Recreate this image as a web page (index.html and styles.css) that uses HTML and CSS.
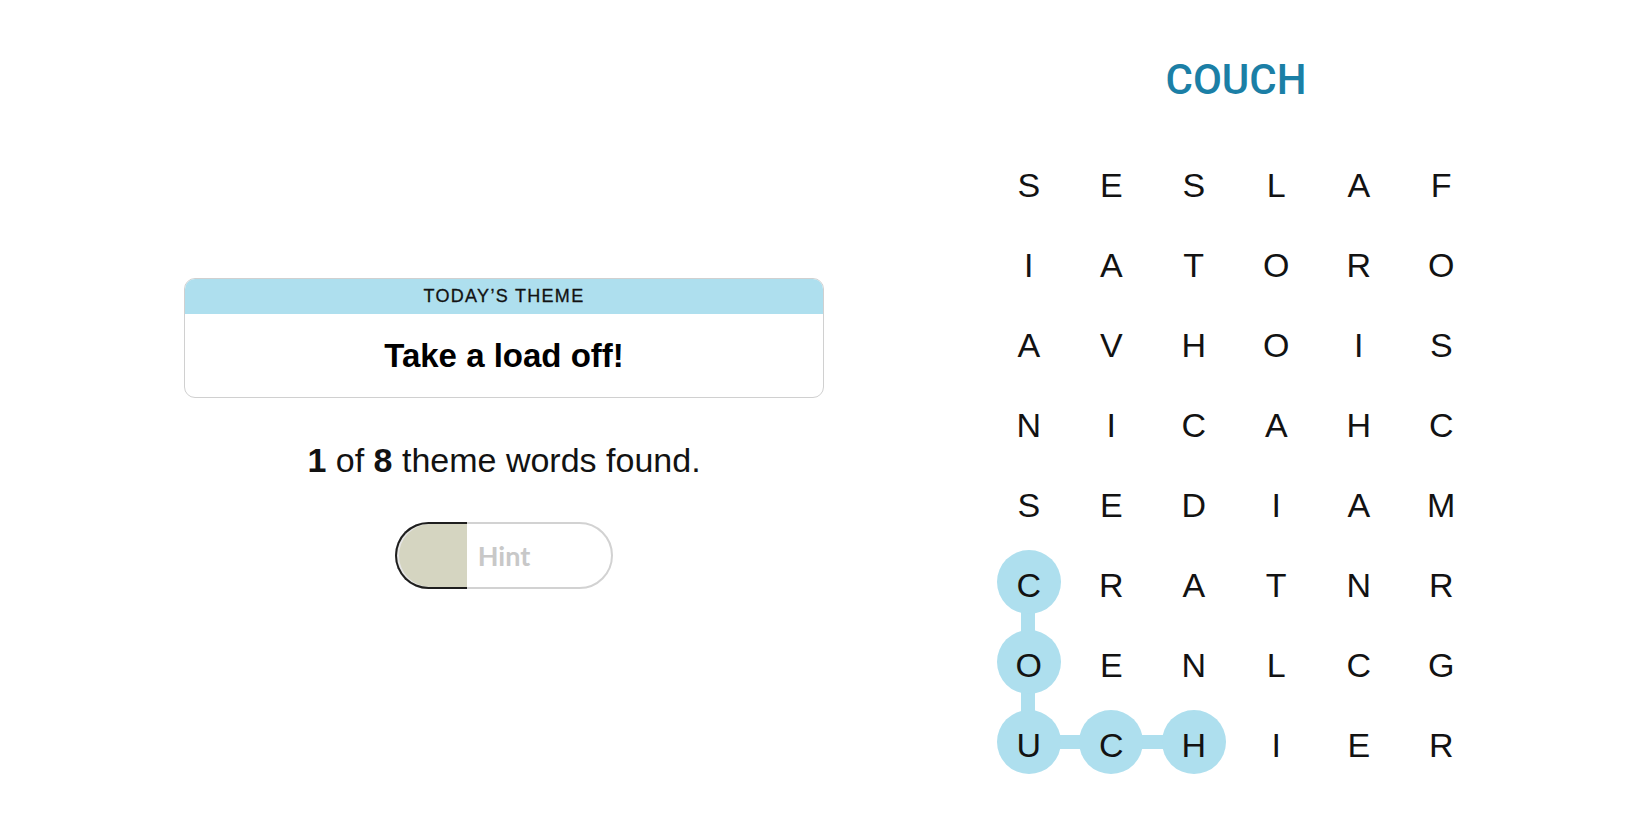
FILE: index.html
```html
<!DOCTYPE html>
<html lang="en">
<head>
<meta charset="utf-8">
<title>Strands</title>
<link rel="stylesheet" href="styles.css">
</head>
<body>
<main class="game">
  <section class="side">
    <div class="theme-card">
      <div class="theme-head">TODAY’S THEME</div>
      <div class="theme-body">Take a load off!</div>
    </div>
    <p class="progress"><b>1</b> of <b>8</b> theme words found.</p>
    <button class="hint">
      <span class="hint-fill"></span>
      <span class="hint-label">Hint</span>
    </button>
  </section>
  <section class="play">
    <h1 class="word">COUCH</h1>
    <div class="board">
      <svg class="links" width="492" height="640" viewBox="0 0 492 640" aria-hidden="true">
        <polyline points="40,440 40,600 205,600" fill="none" stroke="#aedfee" stroke-width="14"/>
      </svg>
      <span class="cell">S</span><span class="cell">E</span><span class="cell">S</span><span class="cell">L</span><span class="cell">A</span><span class="cell">F</span>
      <span class="cell">I</span><span class="cell">A</span><span class="cell">T</span><span class="cell">O</span><span class="cell">R</span><span class="cell">O</span>
      <span class="cell">A</span><span class="cell">V</span><span class="cell">H</span><span class="cell">O</span><span class="cell">I</span><span class="cell">S</span>
      <span class="cell">N</span><span class="cell">I</span><span class="cell">C</span><span class="cell">A</span><span class="cell">H</span><span class="cell">C</span>
      <span class="cell">S</span><span class="cell">E</span><span class="cell">D</span><span class="cell">I</span><span class="cell">A</span><span class="cell">M</span>
      <span class="cell sel">C</span><span class="cell">R</span><span class="cell">A</span><span class="cell">T</span><span class="cell">N</span><span class="cell">R</span>
      <span class="cell sel">O</span><span class="cell">E</span><span class="cell">N</span><span class="cell">L</span><span class="cell">C</span><span class="cell">G</span>
      <span class="cell sel">U</span><span class="cell sel">C</span><span class="cell sel">H</span><span class="cell">I</span><span class="cell">E</span><span class="cell">R</span>
    </div>
  </section>
</main>
</body>
</html>
```

FILE: styles.css
```css
html, body {
  margin: 0;
  padding: 0;
  background: #ffffff;
  color: #121212;
  font-family: "Liberation Sans", Arial, sans-serif;
}

.game {
  display: flex;
  align-items: flex-start;
  padding-left: 184px;
  gap: 166px;
}

.side {
  width: 640px;
  padding-top: 278px;
  display: flex;
  flex-direction: column;
  align-items: center;
}

.theme-card {
  width: 640px;
  box-sizing: border-box;
  border: 1px solid #d0d0d0;
  border-radius: 11px;
  overflow: hidden;
}

.theme-head {
  height: 35px;
  background: #aedfee;
  display: flex;
  align-items: center;
  justify-content: center;
  font-size: 18px;
  letter-spacing: 1.3px;
  color: #121212;
  -webkit-text-stroke: 0.3px #121212;
}

.theme-body {
  height: 83px;
  display: flex;
  align-items: center;
  justify-content: center;
  font-size: 33px;
  font-weight: 700;
  color: #000;
}

.progress {
  margin: 42px 0 0;
  font-size: 34px;
  line-height: 40px;
  color: #121212;
}

.progress b {
  font-weight: 700;
}

.hint {
  position: relative;
  margin-top: 42px;
  width: 218px;
  height: 67px;
  box-sizing: border-box;
  border: 2px solid #d2d2d2;
  border-radius: 34px;
  background: #fff;
  padding: 0;
  display: flex;
  align-items: center;
  justify-content: center;
  font-family: Lato, "Liberation Sans", sans-serif;
}

.hint-fill {
  position: absolute;
  left: -2px;
  top: -2px;
  bottom: -2px;
  width: 70px;
  background: #d5d5c1;
  border: 2px solid #1e1e1e;
  border-right: none;
  border-radius: 34px 0 0 34px;
  box-shadow: inset 2px 0 0 #e6e6e6;
}

.hint-label {
  position: relative;
  font-size: 27px;
  font-weight: 700;
  color: #c8c8c8;
}

.play {
  width: 492px;
  padding-top: 55px;
  display: flex;
  flex-direction: column;
  align-items: center;
}

.word {
  margin: 0;
  font-family: Roboto, "Liberation Sans", sans-serif;
  font-weight: 500;
  font-size: 42px;
  line-height: 50px;
  color: #1b7fa6;
}

.board {
  position: relative;
  margin-top: 37px;
  margin-left: -2px;
  display: grid;
  grid-template-columns: repeat(6, 82.5px);
  grid-template-rows: repeat(8, 80px);
}

.links {
  position: absolute;
  left: 0;
  top: 0;
}

.cell {
  position: relative;
  justify-self: center;
  align-self: center;
  width: 64px;
  height: 64px;
  box-sizing: border-box;
  padding-top: 6px;
  border-radius: 50%;
  display: flex;
  align-items: center;
  justify-content: center;
  font-size: 34px;
  color: #121212;
}

.cell.sel {
  background: #aedfee;
}
```
